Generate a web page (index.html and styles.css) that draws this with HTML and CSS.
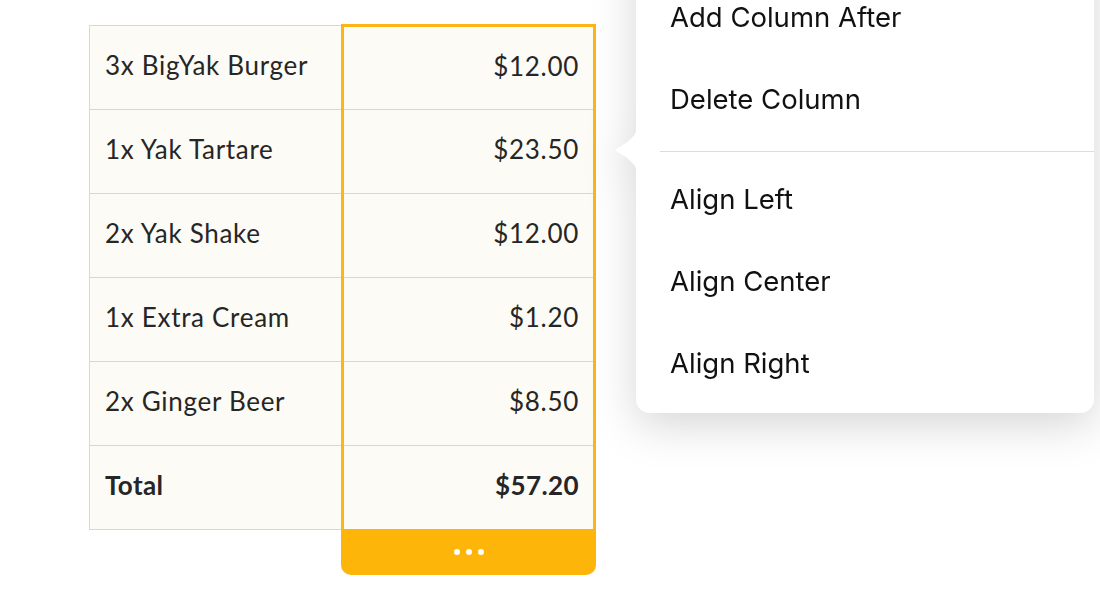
FILE: index.html
```html
<!DOCTYPE html>
<html>
<head>
<meta charset="utf-8">
<link rel="stylesheet" href="styles.css">
</head>
<body>
<div class="page">
  <div class="table">
    <div class="col-items">
      <div class="cell">3x BigYak Burger</div>
      <div class="cell">1x Yak Tartare</div>
      <div class="cell">2x Yak Shake</div>
      <div class="cell">1x Extra Cream</div>
      <div class="cell">2x Ginger Beer</div>
      <div class="cell total">Total</div>
    </div>
    <div class="selcol">
      <div class="selbox">
        <div class="cell num first">$12.00</div>
        <div class="cell num">$23.50</div>
        <div class="cell num">$12.00</div>
        <div class="cell num">$1.20</div>
        <div class="cell num">$8.50</div>
        <div class="cell num total last">$57.20</div>
      </div>
      <div class="handle"><span class="dot"></span><span class="dot"></span><span class="dot"></span></div>
    </div>
  </div>
</div>
<div class="menu">
  <svg class="arrow" width="22" height="48" viewBox="0 0 22 48"><path d="M22 0 C22 8 17 12 11 17 L2 22.5 Q0 24 2 25.5 L11 31 C17 36 22 40 22 48 Z" fill="#fff"/></svg>
  <div class="group">
    <div class="item">Add Column After</div>
    <div class="item">Delete Column</div>
  </div>
  <div class="sep"></div>
  <div class="group">
    <div class="item">Align Left</div>
    <div class="item">Align Center</div>
    <div class="item">Align Right</div>
  </div>
</div>
</body>
</html>
```

FILE: styles.css
```css
html, body {
  margin: 0;
  padding: 0;
  background: #fff;
  width: 1100px;
  height: 607px;
  overflow: hidden;
}
.page {
  padding: 24px 0 0 89px;
}
.table {
  display: flex;
  align-items: flex-start;
  font-family: Lato, "Noto Sans", sans-serif;
  font-size: 26px;
  letter-spacing: 0.7px;
  color: #262626;
}
.col-items {
  margin-top: 1px;
  width: 252px;
  box-sizing: border-box;
  border-left: 1px solid #d9d7d2;
  border-top: 1px solid #d9d7d2;
}
.cell {
  box-sizing: border-box;
  height: 84px;
  border-bottom: 1px solid #d9d7d2;
  background: #fdfbf5;
  display: flex;
  align-items: center;
  padding: 0 15px 5px 15px;
}
.cell.total {
  font-weight: 700;
  letter-spacing: 0.4px;
}
.selcol {
  width: 255px;
  display: flex;
  flex-direction: column;
}
.selbox {
  border: 3px solid #fdb515;
  border-bottom: none;
}
.cell.num {
  justify-content: flex-end;
  padding-right: 14px;
}
.cell.first {
  height: 83px;
}
.cell.last {
  height: 83px;
  border-bottom: none;
}
.handle {
  height: 46px;
  background: #fdb50a;
  border-radius: 0 0 10px 10px;
  display: flex;
  align-items: center;
  justify-content: center;
  gap: 6px;
}
.dot {
  width: 6px;
  height: 6px;
  border-radius: 50%;
  background: #fff;
}
.menu {
  position: absolute;
  left: 636px;
  top: -70px;
  width: 458px;
  background: #fff;
  border-radius: 14px;
  padding: 46px 0 9px 0;
  filter: drop-shadow(0 12px 22px rgba(0, 0, 0, 0.16));
  font-family: Inter, "Liberation Sans", sans-serif;
  font-size: 27.5px;
  color: #111;
}
.arrow {
  position: absolute;
  left: -21px;
  top: 196px;
}
.item {
  height: 82px;
  display: flex;
  align-items: center;
  padding-left: 34px;
}
.sep {
  height: 1px;
  background: #dcdcdc;
  margin: 11px 0 6px 24px;
}
```
